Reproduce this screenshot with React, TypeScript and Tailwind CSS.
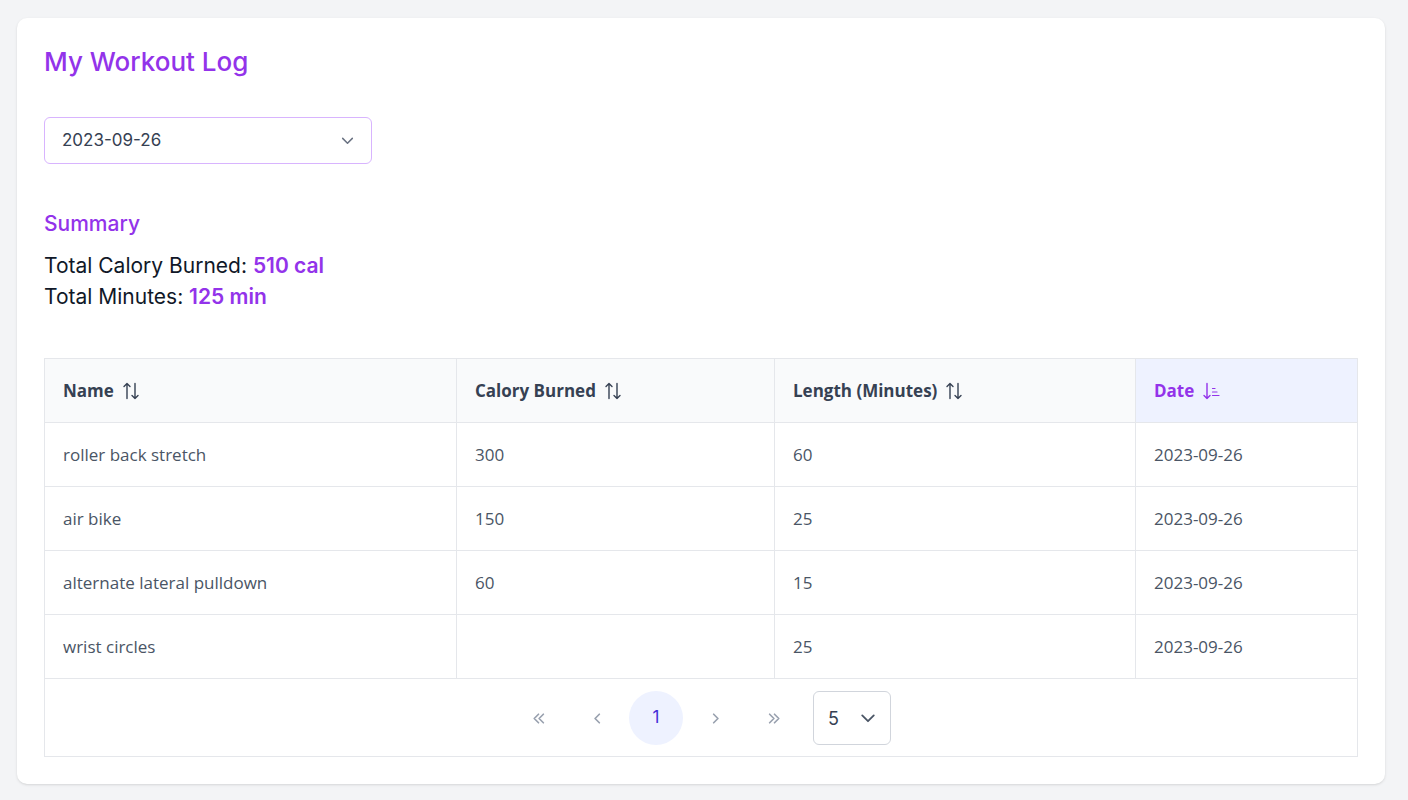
import React from "react";

const rows = [
  { name: "roller back stretch", cal: "300", len: "60", date: "2023-09-26" },
  { name: "air bike", cal: "150", len: "25", date: "2023-09-26" },
  { name: "alternate lateral pulldown", cal: "60", len: "15", date: "2023-09-26" },
  { name: "wrist circles", cal: "", len: "25", date: "2023-09-26" },
];

function SortAltIcon() {
  return (
    <svg width="20" height="20" viewBox="0 0 20 20" fill="none" stroke="currentColor" strokeWidth="1.4" strokeLinecap="round" strokeLinejoin="round">
      <path d="M6 2.5v15M3 5.5l3-3 3 3" />
      <path d="M14 2.5v15M11 14.5l3 3 3-3" />
    </svg>
  );
}

function SortDownIcon() {
  return (
    <svg width="20" height="20" viewBox="0 0 20 20" fill="none" stroke="currentColor" strokeWidth="1.4" strokeLinecap="round" strokeLinejoin="round">
      <path d="M6 2.5v15M3 14.5l3 3 3-3" />
      <path d="M11.5 7.5h2.5M11.5 11h4.5M11.5 14.5h6.5" strokeWidth="1.2" />
    </svg>
  );
}

function Chevron({ d, size = 14, className }: { d: string; size?: number; className?: string }) {
  return (
    <svg width={size} height={size} viewBox="0 0 14 14" fill="none" stroke="currentColor" strokeWidth="1.4" strokeLinecap="round" strokeLinejoin="round" className={className}>
      <path d={d} />
    </svg>
  );
}

const headFont = { fontFamily: "Inter, 'Noto Sans', sans-serif" };

export default function App() {
  const cell = "h-16 border-r border-b border-gray-200 px-[18px] flex items-center";
  return (
    <div className="min-h-screen bg-gray-100 pt-[18px] pr-[23px] pb-4 pl-[17px]" style={{ fontFamily: "'Open Sans', 'Noto Sans', sans-serif" }}>
      <div className="rounded-[10px] bg-white px-[27px] pt-7 pb-[27px] shadow-sm">
        <h1 className="h-8 text-[26px] font-medium leading-8 text-[#9333ea]" style={headFont}>
          My Workout Log
        </h1>

        <div className="mt-[39px] flex h-[47px] w-[328px] items-center justify-between rounded-md border border-[#d8b4fe] pl-[17px] pr-[16px] text-[17px] text-gray-700" style={headFont}>
          <span>2023-09-26</span>
          <Chevron d="M2.5 5l4.5 4.5L11.5 5" size={15} className="text-gray-500" />
        </div>

        <h2 className="mt-[46px] h-7 text-[21px] font-medium leading-7 text-[#9333ea]" style={headFont}>
          Summary
        </h2>
        <div className="mt-3 text-[21px] leading-[31px] text-gray-900" style={headFont}>
          <div>
            Total Calory Burned: <span className="font-semibold text-[#9333ea]">510 cal</span>
          </div>
          <div>
            Total Minutes: <span className="font-semibold text-[#9333ea]">125 min</span>
          </div>
        </div>

        <div className="mt-[46px]">
          <div className="grid grid-cols-[412px_318px_361px_1fr] border-t border-l border-gray-200 text-[17px]">
            <div className={`${cell} gap-[7px] bg-gray-50 font-bold text-gray-700`}>
              Name <SortAltIcon />
            </div>
            <div className={`${cell} gap-[7px] bg-gray-50 font-bold text-gray-700`}>
              Calory Burned <SortAltIcon />
            </div>
            <div className={`${cell} gap-[7px] bg-gray-50 font-bold text-gray-700`}>
              Length (Minutes) <SortAltIcon />
            </div>
            <div className={`${cell} gap-[7px] bg-[#eef2ff] font-bold text-[#9333ea]`}>
              Date <SortDownIcon />
            </div>
            {rows.map(r => (
              <React.Fragment key={r.name}>
                <div className={`${cell} text-gray-600`}>{r.name}</div>
                <div className={`${cell} text-gray-600`}>{r.cal}</div>
                <div className={`${cell} text-gray-600`}>{r.len}</div>
                <div className={`${cell} text-gray-600`}>{r.date}</div>
              </React.Fragment>
            ))}
          </div>
          <div className="flex items-center justify-center border-r border-b border-l border-gray-200 pt-3 pb-[11px]">
            <div className="flex items-center gap-[5px] text-gray-400">
              <button className="flex h-[54px] w-[54px] items-center justify-center rounded-full">
                <Chevron d="M7 3.5L3.5 7 7 10.5M11 3.5L7.5 7 11 10.5" size={17} />
              </button>
              <button className="flex h-[54px] w-[54px] items-center justify-center rounded-full">
                <Chevron d="M8.5 3.5L5 7l3.5 3.5" size={17} />
              </button>
              <button className="flex h-[54px] w-[54px] items-center justify-center rounded-full bg-[#eef2ff] text-[17px] text-indigo-700" style={headFont}>
                1
              </button>
              <button className="flex h-[54px] w-[54px] items-center justify-center rounded-full">
                <Chevron d="M5.5 3.5L9 7l-3.5 3.5" size={17} />
              </button>
              <button className="flex h-[54px] w-[54px] items-center justify-center rounded-full">
                <Chevron d="M3 3.5L6.5 7 3 10.5M7 3.5L10.5 7 7 10.5" size={17} />
              </button>
            </div>
            <div className="ml-[12px] flex h-[54px] w-[78px] items-center justify-between rounded-md border border-gray-300 pl-[14px] pr-[13px] text-[18px] text-gray-700" style={headFont}>
              <span>5</span>
              <Chevron d="M2.5 5l4.5 4.5L11.5 5" size={18} className="text-gray-600" />
            </div>
          </div>
        </div>
      </div>
    </div>
  );
}
